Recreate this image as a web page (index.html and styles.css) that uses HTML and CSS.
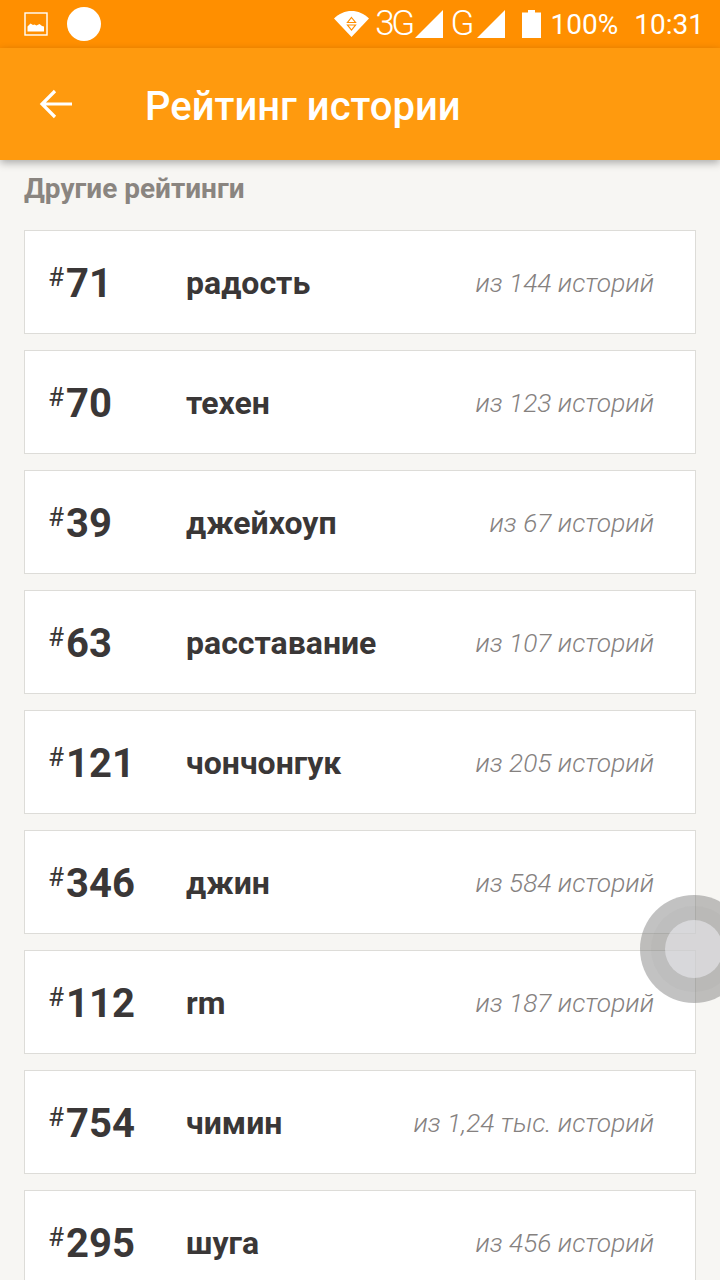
FILE: index.html
```html
<!DOCTYPE html>
<html lang="ru">
<head>
  <meta charset="UTF-8" />
  <meta name="viewport" content="width=device-width, initial-scale=1.0"/>
  <title>Рейтинг истории</title>
  <link rel="stylesheet" href="styles.css">
</head>
<body>

<div class="statusbar">
  <div class="status-left">
    <svg class="ic-image" width="24" height="24" viewBox="0 0 24 24">
      <rect x="1" y="1" width="22" height="22" fill="none" stroke="#fff" stroke-width="1.4"/>
      <path d="M3.5 19.500v-5l3-3 2.500 1.500 1.500-.5 2 1 3-1.500 2.500 2 2 .5v5z" fill="#fff"/>
    </svg>
    <span class="status-dot"></span>
  </div>
  <div class="status-right">
    <svg width="35" height="28" viewBox="0 0 35 28">
      <path d="M0 8.500C5 3.500 11 1 17.500 1S30 3.500 35 8.500L17.500 27z" fill="#fff"/>
      <path d="M17.500 7.500l4 5h-8z M13.500 15h8l-4 5z" fill="none" stroke="#ff8f00" stroke-width="1.200"/>
    </svg>
    <span class="net net-3g">3G</span>
    <svg width="28" height="28" viewBox="0 0 28 28"><path d="M0 28L28 0v28z" fill="#fff"/></svg>
    <span class="net net-g">G</span>
    <svg width="28" height="28" viewBox="0 0 28 28"><path d="M0 28L28 0v28z" fill="#fff"/></svg>
    <svg class="ic-battery" width="19" height="28" viewBox="0 0 19 28"><path d="M6 0h7v2.500h6V28H0V2.500h6z" fill="#fff"/></svg>
    <span class="status-pct">100%</span>
    <span class="status-time">10:31</span>
  </div>
</div>

<header class="toolbar">
  <svg class="back" width="34" height="32" viewBox="0 0 34 32">
    <path d="M33 16H3M16 3L3 16l13 13" fill="none" stroke="#fff" stroke-width="3.200"/>
  </svg>
  <h1>Рейтинг истории</h1>
</header>

<main class="content">
  <h2>Другие рейтинги</h2>

  <div class="card">
    <div class="rank"><sup>#</sup>71</div>
    <div class="tag">радость</div>
    <div class="total">из 144 историй</div>
  </div>
  <div class="card">
    <div class="rank"><sup>#</sup>70</div>
    <div class="tag">техен</div>
    <div class="total">из 123 историй</div>
  </div>
  <div class="card">
    <div class="rank"><sup>#</sup>39</div>
    <div class="tag">джейхоуп</div>
    <div class="total">из 67 историй</div>
  </div>
  <div class="card">
    <div class="rank"><sup>#</sup>63</div>
    <div class="tag">расставание</div>
    <div class="total">из 107 историй</div>
  </div>
  <div class="card">
    <div class="rank"><sup>#</sup>121</div>
    <div class="tag">чончонгук</div>
    <div class="total">из 205 историй</div>
  </div>
  <div class="card">
    <div class="rank"><sup>#</sup>346</div>
    <div class="tag">джин</div>
    <div class="total">из 584 историй</div>
  </div>
  <div class="card">
    <div class="rank"><sup>#</sup>112</div>
    <div class="tag">rm</div>
    <div class="total">из 187 историй</div>
  </div>
  <div class="card">
    <div class="rank"><sup>#</sup>754</div>
    <div class="tag">чимин</div>
    <div class="total">из 1,24 тыс. историй</div>
  </div>
  <div class="card">
    <div class="rank"><sup>#</sup>295</div>
    <div class="tag">шуга</div>
    <div class="total">из 456 историй</div>
  </div>
</main>

<div class="assist"><div class="assist-inner"></div></div>

</body>
</html>
```

FILE: styles.css
```css
html, body {
  margin: 0;
  height: 1280px;
  overflow: hidden;
}

body {
  font-family: Roboto, "Noto Sans", sans-serif;
  background-color: #f7f6f3;
  position: relative;
}

.statusbar {
  height: 48px;
  background-color: #ff8f00;
  display: flex;
  justify-content: space-between;
  align-items: center;
  color: #fff;
  padding: 0 16px 0 24px;
}

.status-left, .status-right {
  display: flex;
  align-items: center;
}

.status-dot {
  width: 34px;
  height: 34px;
  border-radius: 50%;
  background-color: #fff;
  margin-left: 19px;
}

.status-right svg {
  flex: none;
}

.net {
  font-size: 35px;
  font-weight: 300;
  line-height: 48px;
}

.net-3g {
  margin-left: 6px;
  margin-right: 3px;
  letter-spacing: -3.5px;
}

.net-g {
  margin-left: 8px;
  margin-right: 4px;
  letter-spacing: -2px;
}

.ic-battery {
  margin-left: 17px;
}

.status-pct {
  font-size: 28px;
  margin-left: 10px;
}

.status-time {
  font-size: 28px;
  margin-left: 16px;
}

.toolbar {
  height: 112px;
  background-color: #ff9a0e;
  display: flex;
  align-items: center;
  box-shadow: 0 3px 8px rgba(0, 0, 0, 0.3);
  position: relative;
  padding-left: 39px;
}

.toolbar h1 {
  margin: 4px 0 0 72px;
  font-size: 40px;
  font-weight: 500;
  color: #fff;
}

.content {
  padding: 11px 24px 0;
}

.content h2 {
  margin: 0 0 23px;
  font-size: 28px;
  line-height: 36px;
  font-weight: 700;
  color: #8a8580;
}

.card {
  height: 104px;
  box-sizing: border-box;
  background-color: #fff;
  border: 1px solid #dddcd8;
  margin-bottom: 16px;
  display: flex;
  align-items: center;
  padding: 2px 41px 0 23px;
  color: #3a3737;
}

.rank {
  width: 138px;
  flex: none;
  font-size: 40px;
  font-weight: 700;
  line-height: 48px;
  padding-top: 2px;
}

.rank sup {
  font-size: 26px;
  font-weight: 400;
  line-height: 0;
  vertical-align: 11px;
  margin-right: 2px;
}

.tag {
  font-size: 32px;
  font-weight: 700;
  flex: 1;
}

.total {
  font-size: 26.3px;
  font-weight: 300;
  font-style: italic;
  color: #85817f;
}

.assist {
  position: absolute;
  left: 640px;
  top: 895px;
  width: 108px;
  height: 108px;
  border-radius: 50%;
  background-color: rgba(120, 120, 120, 0.45);
  display: flex;
  align-items: center;
  justify-content: center;
}

.assist-inner {
  width: 58px;
  height: 58px;
  border-radius: 50%;
  background-color: rgba(235, 235, 240, 0.55);
  box-shadow: 0 0 0 14px rgba(100, 100, 100, 0.04);
}
```
